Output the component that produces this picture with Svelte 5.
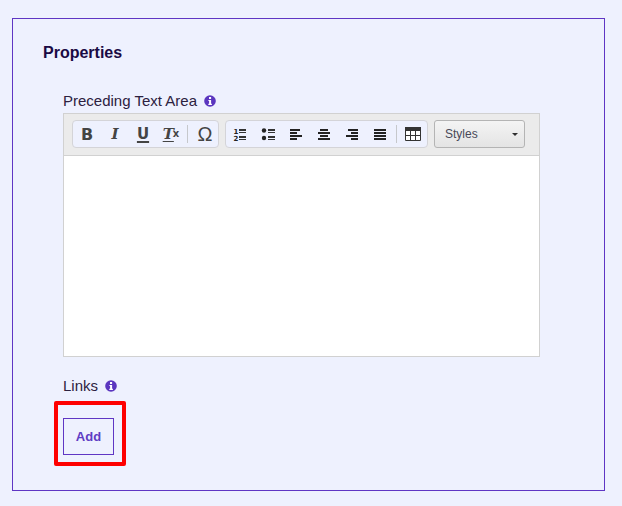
<script>
  const alignRows = {
    left: [[2, 12], [2, 9], [2, 14], [2, 9]],
    center: [[4, 12], [2, 14], [4, 12], [2, 14]],
    right: [[4, 14], [7, 14], [2, 14], [7, 14]],
    justify: [[2, 14], [2, 14], [2, 14], [2, 14]],
  };
</script>

{#snippet info()}
  <svg class="info" width="12" height="12" viewBox="0 0 12 12" aria-hidden="true">
    <circle cx="6" cy="6" r="5.8" fill="#5b36bf" />
    <rect x="5" y="2" width="2.1" height="2" fill="#fff" />
    <path d="M4.4 5h2.7v3.800h.8v1.100H4.300V8.800h.8V6h-.7z" fill="#fff" />
  </svg>
{/snippet}

{#snippet align(kind)}
  <span class="tool">
    <svg width="16" height="16" viewBox="0 0 16 16" aria-hidden="true">
      {#each alignRows[kind] as [a, b], i}
        <rect x={a} y={3 + i * 3} width={b - a} height="2" fill="#222" />
      {/each}
    </svg>
  </span>
{/snippet}

{#snippet listLines(x)}
  <rect {x} y="3" width="7" height="2" fill="#333" />
  <rect {x} y="6" width="7" height="1" fill="#333" />
  <rect {x} y="10" width="7" height="2" fill="#333" />
  <rect {x} y="13" width="7" height="1" fill="#333" />
{/snippet}

<div class="panel">
  <h2>Properties</h2>

  <div class="field">
    <div class="label">Preceding Text Area {@render info()}</div>
    <div class="editor">
      <div class="toolbar">
        <div class="group first">
          <span class="tool bold">B</span>
          <span class="tool italic">I</span>
          <span class="tool underline">U</span>
          <span class="tool clear"><span class="t">T</span><sub>x</sub></span>
          <span class="sep"></span>
          <span class="tool omega">Ω</span>
        </div>

        <div class="group second">
          <span class="tool">
            <svg width="16" height="16" viewBox="0 0 16 16" aria-hidden="true">
              <text class="digit" x="1.500" y="7.500">1</text>
              <text class="digit" x="1.500" y="14.800">2</text>
              {@render listLines(7)}
            </svg>
          </span>
          <span class="tool">
            <svg width="16" height="16" viewBox="0 0 16 16" aria-hidden="true">
              <circle cx="4" cy="4.500" r="2.200" fill="#222" />
              <circle cx="4" cy="12" r="2.200" fill="#222" />
              {@render listLines(8)}
            </svg>
          </span>
          {@render align('left')}
          {@render align('center')}
          {@render align('right')}
          {@render align('justify')}
          <span class="sep"></span>
          <span class="tool table">
            <svg width="16" height="16" viewBox="0 0 16 16" aria-hidden="true">
              <rect x="0" y="1" width="16" height="14" fill="#fff" />
              <rect x="0" y="1" width="16" height="4" fill="#333" />
              <path d="M.5 4v10.500h15V4M5.500 4v10.500M10.500 4v10.500M.5 9.500h15" fill="none" stroke="#333" />
            </svg>
          </span>
        </div>

        <div class="styles">
          <span>Styles</span>
          <span class="caret"></span>
        </div>
      </div>
      <div class="content"></div>
    </div>
  </div>

  <div class="field links">
    <div class="label">Links {@render info()}</div>
    <div class="add-wrap">
      <button class="add">Add</button>
      <span class="highlight"></span>
    </div>
  </div>
</div>

<style>
  :global(body) {
    background: #eef1fe;
  }

  .panel {
    box-sizing: border-box;
    width: 593px;
    height: 473px;
    margin: 18px 0 0 12px;
    padding: 25px 30px 0;
    border: 1px solid #5f36c4;
    font-family: 'Liberation Sans', Arial, sans-serif;
    color: #1e0f3c;
  }

  h2 {
    margin: 0;
    font-size: 16px;
    line-height: 18px;
    font-weight: bold;
    color: #1a0a44;
  }

  .field {
    margin: 31px 0 0 20px;
  }

  .label {
    display: flex;
    align-items: center;
    gap: 7px;
    font-size: 15px;
    line-height: 16px;
    color: #2c2140;
  }

  .editor {
    box-sizing: border-box;
    width: 477px;
    height: 244px;
    margin-top: 4px;
    border: 1px solid #d1d1d1;
    background: #fff;
  }

  .toolbar {
    box-sizing: border-box;
    display: flex;
    gap: 6px;
    height: 42px;
    padding: 6px 0 0 8px;
    background: #ebebeb;
    border-bottom: 1px solid #d1d1d1;
  }

  .group {
    box-sizing: border-box;
    display: flex;
    align-items: center;
    height: 28px;
    background: #eef1fe;
    border: 1px solid #d4d4d8;
    border-radius: 4px;
  }

  .first {
    width: 147px;
  }

  .second {
    width: 203px;
  }

  .tool {
    display: flex;
    align-items: center;
    justify-content: center;
    flex: none;
    width: 28px;
    height: 24px;
    color: #444;
    font-family: 'DejaVu Sans', sans-serif;
    font-size: 15px;
    font-weight: bold;
  }

  .bold {
    font-size: 16px;
  }

  .italic,
  .clear {
    font-family: 'DejaVu Serif', serif;
    font-style: italic;
    font-size: 15px;
  }

  .underline {
    text-decoration: underline;
    text-decoration-thickness: 2px;
    text-underline-offset: 2px;
  }

  .clear .t {
    text-decoration: underline;
    text-decoration-thickness: 1px;
    text-underline-offset: 2px;
  }

  .clear sub {
    margin-left: -1px;
    font-family: 'DejaVu Sans', sans-serif;
    font-style: normal;
    font-size: 10px;
    line-height: 0;
    vertical-align: -3px;
  }

  .omega {
    margin-left: 2px;
    width: 30px;
    font-family: 'Liberation Sans', Arial, sans-serif;
    font-size: 20px;
    font-weight: normal;
  }

  .sep {
    flex: none;
    width: 1px;
    height: 18px;
    margin-left: 2px;
    background: #c6c8cc;
  }

  .table {
    margin-left: 2px;
  }

  .digit {
    font-family: 'DejaVu Sans', sans-serif;
    font-size: 7px;
    font-weight: bold;
    fill: #222;
  }

  .styles {
    box-sizing: border-box;
    display: flex;
    align-items: center;
    justify-content: space-between;
    width: 91px;
    height: 28px;
    padding: 0 6px 0 10px;
    border: 1px solid #b4b4b4;
    border-radius: 3px;
    background: linear-gradient(#f4f4f4, #e4e4e4);
    font-size: 12px;
    color: #484858;
  }

  .caret {
    width: 0;
    height: 0;
    border-left: 3px solid transparent;
    border-right: 3px solid transparent;
    border-top: 3px solid #2f2f2f;
  }

  .links {
    margin-top: 21px;
  }

  .add-wrap {
    position: relative;
    width: 51px;
    margin-top: 24px;
  }

  .add {
    box-sizing: border-box;
    display: block;
    width: 51px;
    height: 37px;
    padding: 0;
    border: 1px solid #5f36c4;
    border-radius: 0;
    background: transparent;
    font-family: inherit;
    font-size: 13px;
    font-weight: bold;
    color: #5f3dc4;
  }

  /* red annotation box drawn over the button */
  .highlight {
    position: absolute;
    left: -9px;
    top: -17px;
    width: 72px;
    height: 65px;
    box-sizing: border-box;
    border: 4px solid #fe0000;
    border-radius: 2px;
    pointer-events: none;
  }
</style>
